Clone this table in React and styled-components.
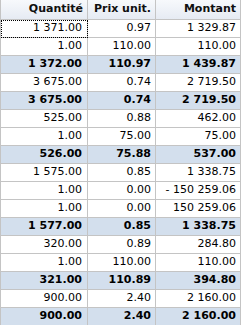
import styled, { createGlobalStyle } from "styled-components";

const GlobalStyle = createGlobalStyle`
  html, body {
    margin: 0;
    padding: 0;
    background: #ffffff;
  }
`;

const Grid = styled.div`
  display: grid;
  grid-template-columns: 87px 68px 85px;
  width: 241px;
  border-left: 1px solid #c4c4c4;
  box-sizing: border-box;
  font-family: "DejaVu Sans", Verdana, sans-serif;
  font-size: 11px;
  color: #000000;
`;

const HeaderCell = styled.div`
  box-sizing: border-box;
  height: 20px;
  padding: 0 4px 2px 0;
  line-height: 18px;
  text-align: right;
  font-weight: bold;
  color: #101010;
  background: linear-gradient(#f7f9fc, #e6ebf3);
  border-right: 1px solid #c4c4c4;
  border-bottom: 1px solid #c4c4c4;
  white-space: nowrap;
`;

const Cell = styled.div`
  position: relative;
  box-sizing: border-box;
  height: 18px;
  padding: 0 ${(p) => (p.$first ? 5 : 4)}px 2px 0;
  line-height: 15px;
  text-align: right;
  white-space: nowrap;
  font-weight: ${(p) => (p.$total ? "bold" : "normal")};
  background: ${(p) => (p.$total ? "#d3dfed" : "#ffffff")};
  border-right: 1px solid #c4c4c4;
  border-bottom: 1px solid #c4c4c4;
  outline: ${(p) => (p.$focused ? "1px dotted #000000" : "none")};
  outline-offset: -1px;
`;

const rows = [
  { v: ["1 371.00", "0.97", "1 329.87"], focused: true },
  { v: ["1.00", "110.00", "110.00"] },
  { v: ["1 372.00", "110.97", "1 439.87"], total: true },
  { v: ["3 675.00", "0.74", "2 719.50"] },
  { v: ["3 675.00", "0.74", "2 719.50"], total: true },
  { v: ["525.00", "0.88", "462.00"] },
  { v: ["1.00", "75.00", "75.00"] },
  { v: ["526.00", "75.88", "537.00"], total: true },
  { v: ["1 575.00", "0.85", "1 338.75"] },
  { v: ["1.00", "0.00", "- 150 259.06"] },
  { v: ["1.00", "0.00", "150 259.06"] },
  { v: ["1 577.00", "0.85", "1 338.75"], total: true },
  { v: ["320.00", "0.89", "284.80"] },
  { v: ["1.00", "110.00", "110.00"] },
  { v: ["321.00", "110.89", "394.80"], total: true },
  { v: ["900.00", "2.40", "2 160.00"] },
  { v: ["900.00", "2.40", "2 160.00"], total: true },
];

const headers = ["Quantité", "Prix unit.", "Montant"];

export default function App() {
  return (
    <>
      <GlobalStyle />
      <Grid>
        {headers.map((h) => (
          <HeaderCell key={h}>{h}</HeaderCell>
        ))}
        {rows.map((row, i) =>
          row.v.map((val, j) => (
            <Cell
              key={`${i}-${j}`}
              $first={j === 0}
              $total={row.total}
              $focused={row.focused && j === 0}
            >
              {val}
            </Cell>
          ))
        )}
      </Grid>
    </>
  );
}
